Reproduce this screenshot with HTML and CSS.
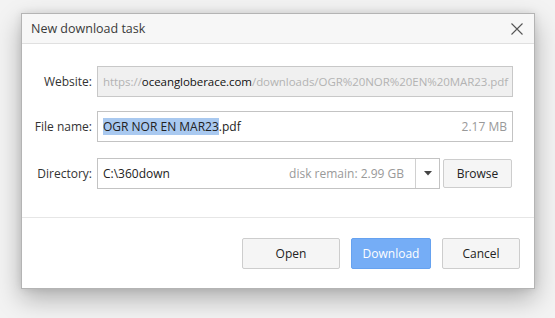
FILE: index.html
```html
<!DOCTYPE html>
<html lang="en">
<head>
  <meta charset="UTF-8">
  <title>New download task</title>
  <link rel="stylesheet" href="styles.css">
</head>
<body>

  <div class="dialog">
    <div class="dialog-head">
      <span class="dialog-title">New download task</span>
      <button class="close-btn" aria-label="Close">
        <svg width="12" height="12" viewBox="0 0 12 12"><path d="M0.5 0.5 L11.5 11.5 M11.5 0.5 L0.5 11.5" stroke="#555" stroke-width="1.1" fill="none"/></svg>
      </button>
    </div>

    <div class="form">
      <label class="row-label">Website:</label>
      <div class="field field-readonly">
        <span class="url"><span class="dim">https://</span>oceangloberace.com<span class="dim">/downloads/OGR%20NOR%20EN%20MAR23.pdf</span></span>
      </div>

      <label class="row-label">File name:</label>
      <div class="field">
        <span class="fname"><span class="sel">OGR NOR EN MAR23</span>.pdf</span>
        <span class="hint">2.17 MB</span>
      </div>

      <label class="row-label row-dir">Directory:</label>
      <div class="dir-row">
        <div class="field field-dir">
          <span class="fname">C:\360down</span>
          <span class="hint">disk remain: 2.99 GB</span>
          <span class="drop">
            <svg width="8" height="5" viewBox="0 0 8 5"><path d="M0 0 H8 L4 4.5 Z" fill="#444"/></svg>
          </span>
        </div>
        <button class="btn btn-browse">Browse</button>
      </div>
    </div>

    <div class="dialog-foot">
      <button class="btn btn-open">Open</button>
      <button class="btn btn-primary">Download</button>
      <button class="btn btn-cancel">Cancel</button>
    </div>
  </div>

</body>
</html>
```

FILE: styles.css
```css
* {
  box-sizing: border-box;
}

html {
  background-color: #f3f3f3;
}

body {
  margin: 0;
  min-height: 318px;
  padding: 13px 0 0 21px;
  background-color: #f3f3f3;
  font-family: "Open Sans", "Noto Sans", sans-serif;
  font-size: 12px;
  color: #333;
}

.dialog {
  width: 514px;
  background: #fff;
  border: 1px solid #b4b4b4;
  box-shadow: 0 10px 24px rgba(0,0,0,0.28), 0 0 8px rgba(0,0,0,0.10);
}

.dialog-head {
  height: 30px;
  display: flex;
  align-items: center;
  justify-content: space-between;
  padding: 0 11px 0 9px;
  background-color: #f7f7f7;
  border-bottom: 1px solid #e0e0e0;
}

.dialog-title {
  font-size: 12.5px;
  color: #3a3a3a;
}

.close-btn {
  border: none;
  background: none;
  padding: 0;
  width: 12px;
  height: 12px;
  display: flex;
  cursor: pointer;
}

.form {
  display: grid;
  grid-template-columns: 70px 416px;
  column-gap: 5px;
  row-gap: 14px;
  padding: 22px 0 0 0;
  margin-bottom: 28px;
}

.row-label {
  text-align: right;
  align-self: center;
  color: #333;
}

.row-dir {
  margin-top: 2px;
}

.field {
  height: 31px;
  border: 1px solid #c3c3c3;
  display: flex;
  align-items: center;
  padding: 0 5px;
  white-space: nowrap;
  overflow: hidden;
}

.field-readonly {
  background-color: #f0f0f0;
  border-color: #c8c8c8;
}

.url {
  color: #111;
  font-size: 11.5px;
  letter-spacing: -0.05px;
}

.url .dim {
  color: #b3b3b3;
}

.fname {
  flex: 1;
  color: #222;
}

.sel {
  background-color: #a9c9f0;
}

.hint {
  color: #999;
}

.dir-row {
  display: flex;
  align-items: center;
  gap: 3px;
  margin-top: 2px;
}

.field-dir {
  width: 343px;
  padding-right: 0;
}

.drop {
  width: 24px;
  height: 100%;
  margin-left: 11px;
  border-left: 1px solid #d0d0d0;
  display: flex;
  align-items: center;
  justify-content: center;
}

.btn {
  font-family: "Open Sans", "Noto Sans", sans-serif;
  font-size: 12px;
  height: 31px;
  background-color: #f5f5f5;
  color: #222;
  border: 1px solid #cdcdcd;
  border-radius: 2px;
  cursor: pointer;
}

.btn-browse {
  width: 69px;
  height: 29px;
}

.dialog-foot {
  border-top: 1px solid #e6e6e6;
  display: flex;
  justify-content: flex-end;
  gap: 11px;
  padding: 20px 14px 19px 0;
}

.btn-open {
  width: 98px;
}

.btn-primary {
  width: 80px;
  background-color: #75adf6;
  border-color: #66a2f0;
  color: #fff;
}

.btn-cancel {
  width: 78px;
}
```
